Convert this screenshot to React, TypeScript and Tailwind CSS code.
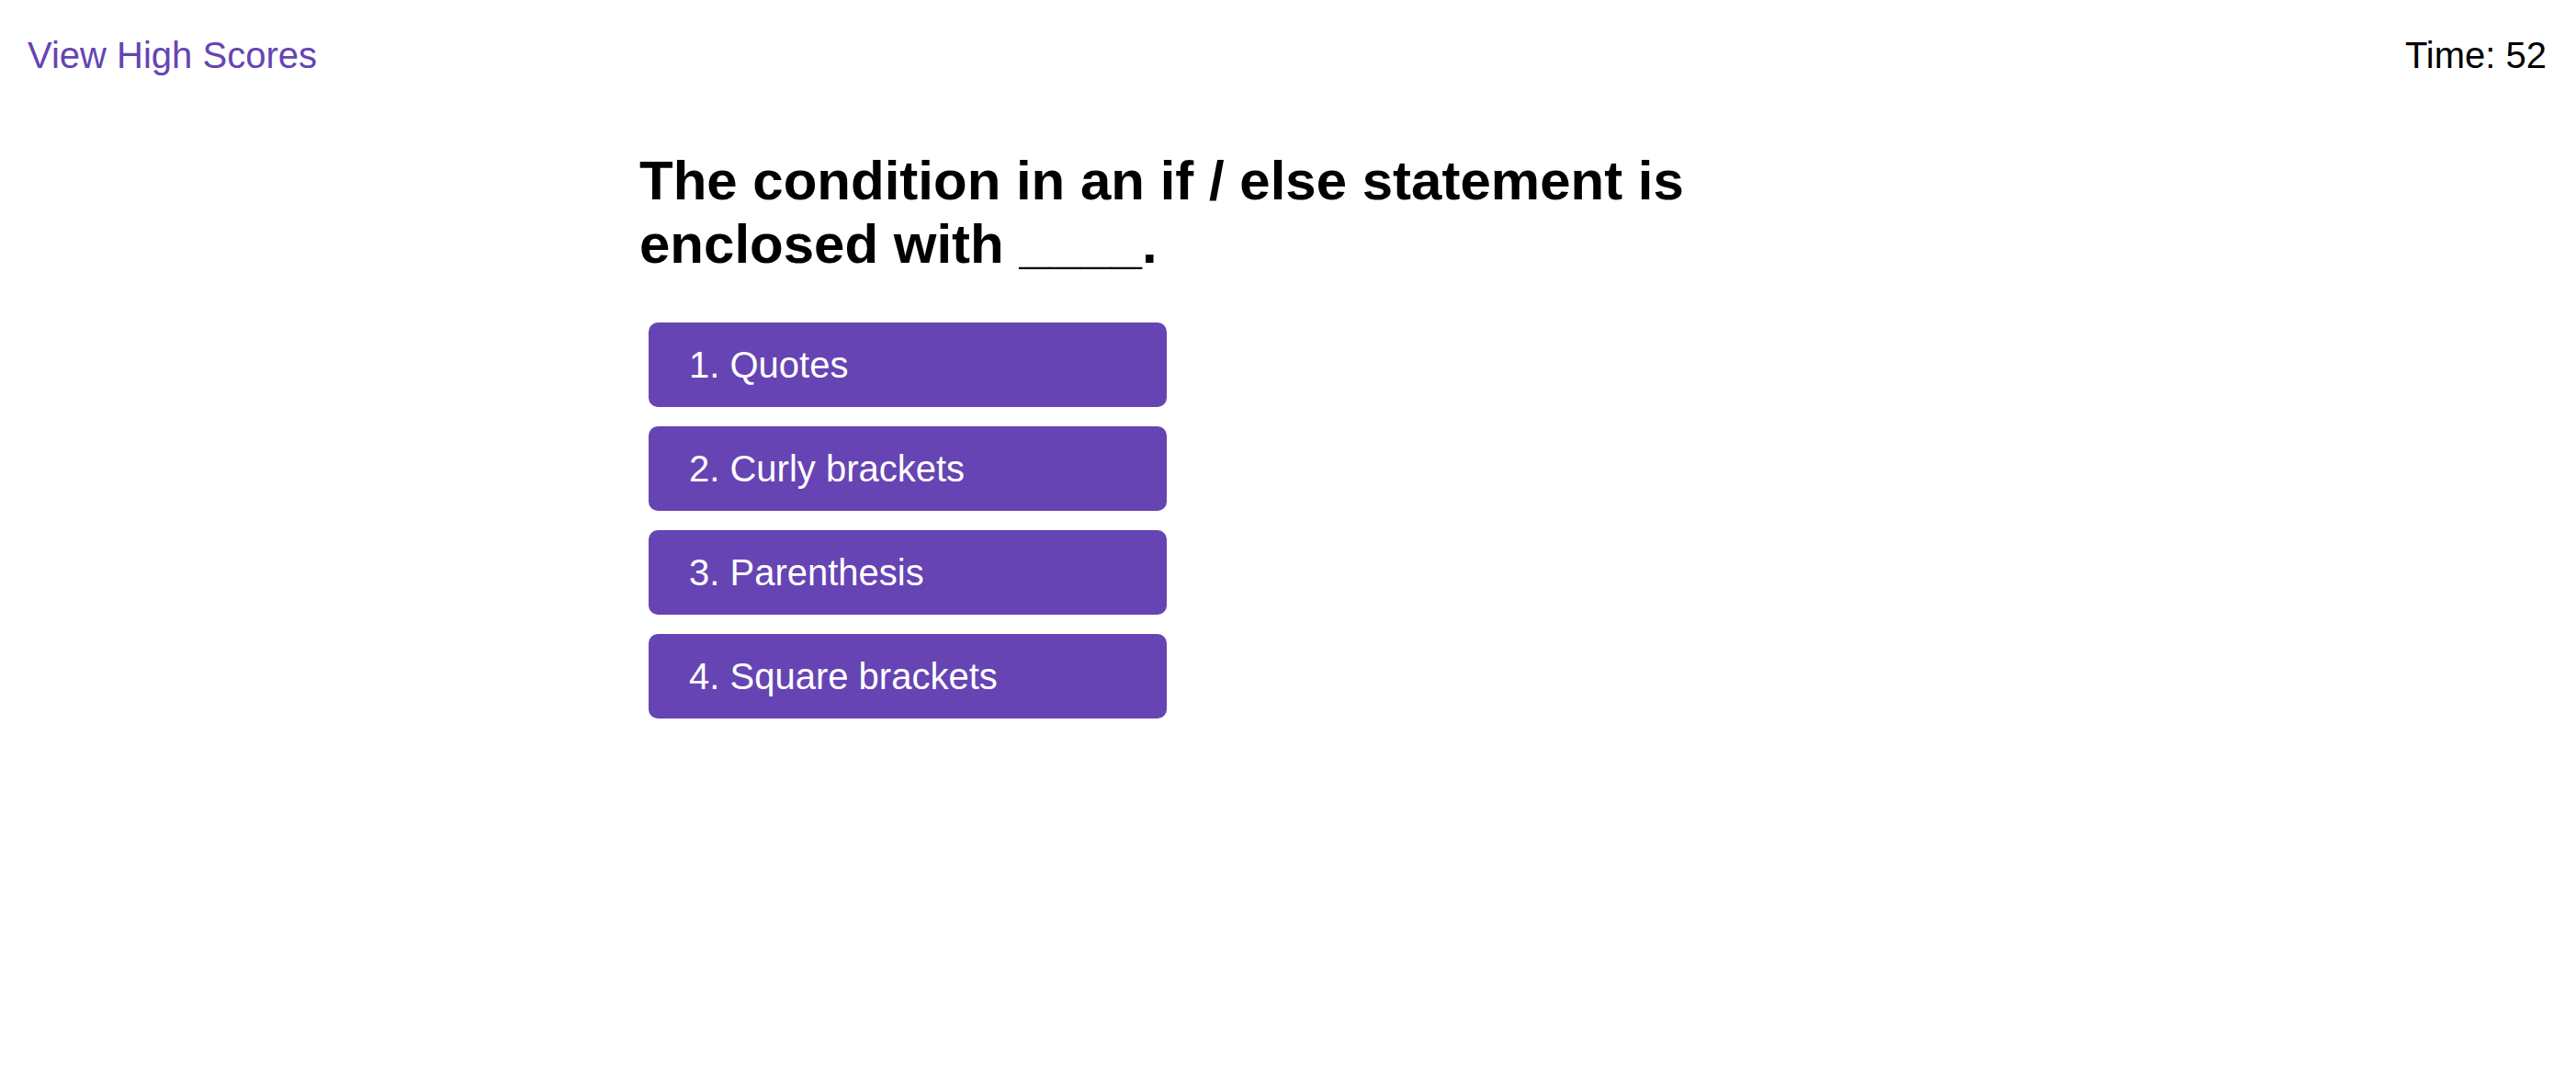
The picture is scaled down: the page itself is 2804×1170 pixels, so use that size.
const choices = ["1. Quotes", "2. Curly brackets", "3. Parenthesis", "4. Square brackets"]

export default function App() {
  return (
    <div className="min-h-screen bg-white font-['Liberation_Sans',Arial,sans-serif] text-black">
      <header className="flex items-start justify-between pl-[30px] pr-[32px] pt-[37px]">
        <a href="#" className="text-[40px] leading-[46px] text-[#6644b3]">
          View High Scores
        </a>
        <span className="text-[40px] leading-[46px]">Time: 52</span>
      </header>

      <main className="pl-[696px] pt-[79px]">
        <h1 className="max-w-[1200px] text-[60px] font-bold leading-[69px]">
          The condition in an if / else statement is enclosed with ____.
        </h1>

        <div className="mt-[51px] flex flex-col gap-[21px] pl-[10px]">
          {choices.map((choice) => (
            <button
              key={choice}
              type="button"
              className="h-[92px] w-[564px] rounded-[10px] bg-[#6644b3] pl-[44px] text-left text-[40px] leading-[46px] text-white"
            >
              {choice}
            </button>
          ))}
        </div>
      </main>
    </div>
  )
}
